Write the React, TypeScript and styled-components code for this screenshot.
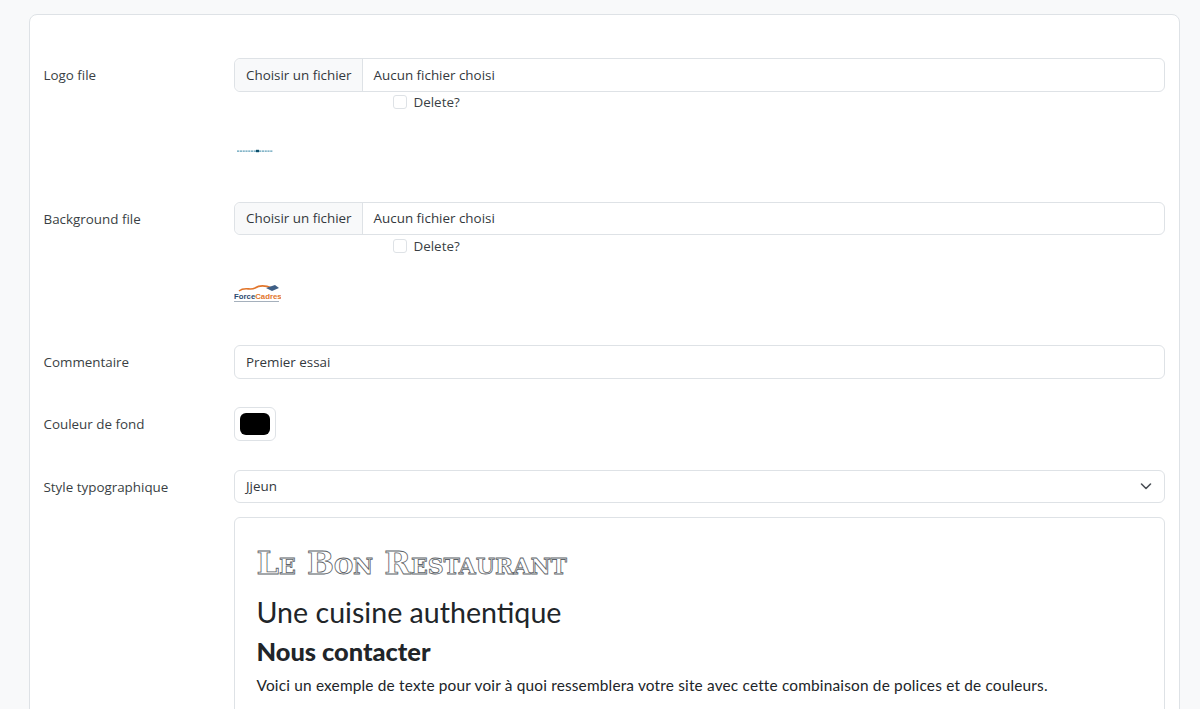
import type { ReactNode } from "react";
import styled, { createGlobalStyle } from "styled-components";

const GlobalStyle = createGlobalStyle`
  html, body {
    margin: 0;
    height: 100%;
    overflow: hidden;
    background: #f8f9fa;
  }
  body {
    font-family: "Open Sans", "Noto Sans", sans-serif;
    font-size: 14px;
    color: #212529;
  }
`;

const Card = styled.main`
  margin: 14px 20px 0 28.5px;
  padding: 43px 14px 24px;
  background: #fff;
  border: 1px solid #dee2e6;
  border-radius: 8px;
`;

const Row = styled.div<{ $gap: number }>`
  display: grid;
  grid-template-columns: 190px 1fr;
  margin-bottom: ${(props) => props.$gap}px;
`;

const Label = styled.label`
  line-height: 34px;
  font-size: 13.4px;
  color: #3a3f44;
`;

const Control = styled.div`
  height: 33.5px;
  box-sizing: border-box;
  display: flex;
  align-items: center;
  background: #fff;
  border: 1px solid #dee2e6;
  border-radius: 6px;
  font-size: 13.4px;
  color: #33383d;
`;

const FileButton = styled.span`
  height: 100%;
  display: flex;
  align-items: center;
  padding: 0 10.5px 0 11.5px;
  background: #f8f9fa;
  border-right: 1px solid #dee2e6;
  border-radius: 6px 0 0 6px;
`;

const FileName = styled.span`
  padding-left: 10.5px;
`;

const TextValue = styled.span`
  padding-left: 11.5px;
`;

const DeleteLine = styled.div`
  height: 21px;
  margin-left: 159px;
  display: flex;
  align-items: center;
  gap: 7px;
  font-size: 13.4px;
  color: #3a3f44;
`;

const Checkbox = styled.span`
  width: 14px;
  height: 14px;
  box-sizing: border-box;
  background: #fff;
  border: 1px solid #dee2e6;
  border-radius: 3px;
`;

const Thumb = styled.div`
  height: 44px;
  margin-top: 16px;
  display: flex;
  align-items: center;
`;

const ColorField = styled.div`
  width: 42px;
  height: 34px;
  box-sizing: border-box;
  padding: 5px;
  background: #fff;
  border: 1px solid #dee2e6;
  border-radius: 6px;
`;

const ColorSwatch = styled.div`
  height: 100%;
  background: #000;
  border-radius: 6px;
`;

const SelectBox = styled(Control)`
  justify-content: space-between;
  padding-right: 10px;
`;

const Preview = styled.section`
  margin-top: 14px;
  padding: 23px 22px 40px;
  border: 1px solid #dee2e6;
  border-radius: 6px;
`;

const BrandTitle = styled.h1`
  margin: 0;
  font-family: "DejaVu Serif", "Liberation Serif", serif;
  font-variant: small-caps;
  font-weight: 700;
  font-size: 32px;
  line-height: 44px;
  white-space: nowrap;
  color: #fff;
  -webkit-text-stroke: 0.8px #5d6368;
`;

const Subtitle = styled.h2`
  margin: 9px 0 0;
  font-family: Lato, sans-serif;
  font-weight: 400;
  font-size: 28.6px;
  line-height: 36px;
  color: #212529;
`;

const ContactTitle = styled.h3`
  margin: 3px 0 0;
  font-family: Lato, sans-serif;
  font-weight: 900;
  font-size: 25.4px;
  line-height: 36px;
  color: #212529;
`;

const SampleText = styled.p`
  margin: 5px 0 0;
  font-family: Lato, sans-serif;
  font-size: 15.4px;
  letter-spacing: 0.18px;
  line-height: 22px;
  color: #212529;
`;

function TinyLogo() {
  return (
    <svg width="40" height="8" viewBox="0 0 40 8" aria-hidden="true">
      <path d="M3 4.1 H22 M25 4.1 H39" stroke="#5f9fb8" strokeWidth="1.2" strokeDasharray="2.2 0.6" />
      <rect x="22" y="2.8" width="3" height="2.4" fill="#0d4f6c" />
    </svg>
  );
}

function ForceLogo() {
  return (
    <svg width="47" height="24" viewBox="0 0 47 24" aria-hidden="true">
      <path d="M5 9 C11 4 16 9 21 6 C27 2 33 4 38 6" fill="none" stroke="#e2762c" strokeWidth="1.6" />
      <path d="M32 6 L41 3 L45 6 L38 9 Z" fill="#3f5f86" />
      <text x="0" y="16.5" fontFamily="Liberation Sans, sans-serif" fontSize="7.8" fontWeight="700" fill="#2d4a70">
        Force<tspan fill="#e2762c">Cadres</tspan>
      </text>
      <rect x="0" y="19" width="45" height="1" fill="#a5b0bc" />
    </svg>
  );
}

function Chevron() {
  return (
    <svg width="16" height="16" viewBox="0 0 16 16" aria-hidden="true">
      <path d="M3.5 6 L8 10.5 L12.5 6" fill="none" stroke="#4a4f55" strokeWidth="1.6" strokeLinecap="round" strokeLinejoin="round" />
    </svg>
  );
}

function FileRow({ label, logo }: { label: string; logo: ReactNode }) {
  return (
    <Row $gap={29}>
      <Label>{label}</Label>
      <div>
        <Control>
          <FileButton>Choisir un fichier</FileButton>
          <FileName>Aucun fichier choisi</FileName>
        </Control>
        <DeleteLine>
          <Checkbox />
          Delete?
        </DeleteLine>
        <Thumb>{logo}</Thumb>
      </div>
    </Row>
  );
}

export default function App() {
  return (
    <>
      <GlobalStyle />
      <Card>
        <FileRow label="Logo file" logo={<TinyLogo />} />
        <FileRow label="Background file" logo={<ForceLogo />} />
        <Row $gap={27.5}>
          <Label>Commentaire</Label>
          <Control>
            <TextValue>Premier essai</TextValue>
          </Control>
        </Row>
        <Row $gap={29}>
          <Label>Couleur de fond</Label>
          <ColorField>
            <ColorSwatch />
          </ColorField>
        </Row>
        <Row $gap={0}>
          <Label>Style typographique</Label>
          <div>
            <SelectBox>
              <TextValue>Jjeun</TextValue>
              <Chevron />
            </SelectBox>
            <Preview>
              <BrandTitle>Le Bon Restaurant</BrandTitle>
              <Subtitle>Une cuisine authentique</Subtitle>
              <ContactTitle>Nous contacter</ContactTitle>
              <SampleText>
                Voici un exemple de texte pour voir à quoi ressemblera votre site avec cette combinaison de polices et de couleurs.
              </SampleText>
            </Preview>
          </div>
        </Row>
      </Card>
    </>
  );
}
